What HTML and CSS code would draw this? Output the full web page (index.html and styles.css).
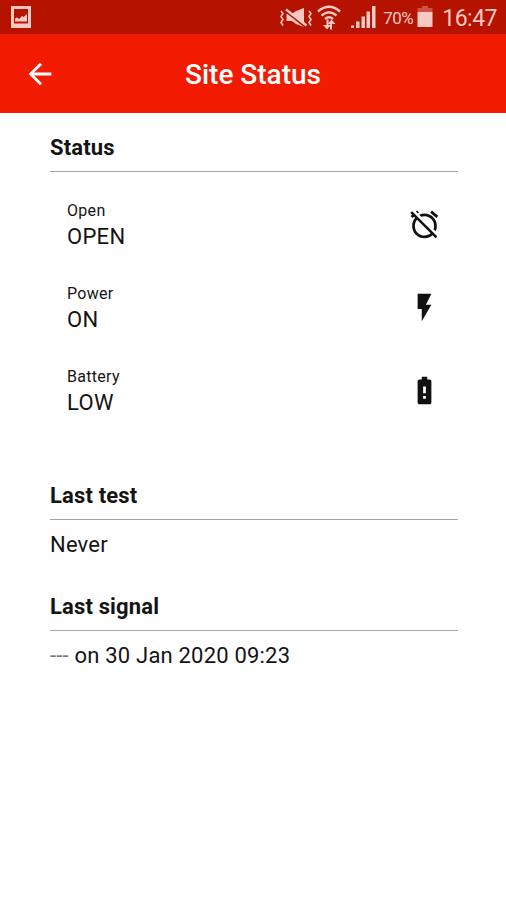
FILE: index.html
```html
<!DOCTYPE html>
<html lang="en">
<head>
    <meta charset="UTF-8">
    <meta name="viewport" content="width=device-width, initial-scale=1.0">
    <title>Site Status</title>
    <link rel="stylesheet" href="styles.css">
</head>
<body>
    <div class="status-bar">
        <svg class="icon-picture" width="20" height="22" viewBox="0 0 20 22">
            <path fill-rule="evenodd" d="M0 0h20v22H0zM3 3v14.500h14V3z"/>
            <path d="M4 15.500v-3l2-1 2 1.500 3-3 1.500 1L16 8v7.500z"/>
        </svg>
        <div class="system-icons">
            <svg class="icon-mute" width="34" height="24" viewBox="0 0 34 24">
                <path d="M7.500 8h5.500l4-3 8-3v19l-8-3-4-3H7.500z"/>
                <path class="gap-line" d="M7 5.500l20 16"/>
                <path class="line" d="M7 3.500l20.500 16"/>
                <path class="wave" d="M2 5l2 2.500-2 3 2 3-2 3 2 3M30 5l2 2.500-2 3 2 3-2 3 2 3"/>
            </svg>
            <svg class="icon-wifi" width="24" height="26" viewBox="0 0 24 26">
                <path class="arc" d="M1 7.500q11-9.500 22 0M4.500 11.500q7.500-6.500 15 0M8 15q4-3.400 8 0"/>
                <path d="M9.500 15.500h2V21H14l-4 4.500L6 21h3.500zM13 25.500V20h-2.500l4-4.500 4 4.500H15v5.500z"/>
            </svg>
            <svg class="icon-signal" width="25" height="23" viewBox="0 0 25 23">
                <path d="M0 20.500h3V23H0zM5 16.500h3.500V23H5zM10.500 11.500H14V23h-3.500zM15.500 6.500H19V23h-3.500zM21 1h3.500v22H21z"/>
            </svg>
            <span class="battery-level">70%</span>
            <svg class="icon-battery" width="16" height="21" viewBox="0 0 16 21">
                <path class="empty" d="M5 0h6v2h4.500v5H.5V2H5z"/>
                <path d="M.5 6h15v15H.5z"/>
            </svg>
            <span class="clock">16:47</span>
        </div>
    </div>

    <header class="app-bar">
        <svg class="back" width="34" height="34" viewBox="0 0 24 24">
            <path d="M20 11H7.830l5.590-5.590L12 4l-8 8 8 8 1.410-1.410L7.830 13H20z"/>
        </svg>
        <h1>Site Status</h1>
    </header>

    <main class="content">
        <section class="section">
            <h2>Status</h2>
            <ul class="status-list">
                <li class="status-item">
                    <div>
                        <p class="label">Open</p>
                        <p class="value">OPEN</p>
                    </div>
                    <svg class="item-icon" viewBox="0 0 24 24">
                        <path d="M12 6c3.870 0 7 3.130 7 7 0 .84-.16 1.650-.43 2.400l1.520 1.520c.58-1.190.91-2.510.91-3.920 0-4.970-4.030-9-9-9-1.410 0-2.730.33-3.920.91L9.600 6.430C10.350 6.160 11.160 6 12 6zm10-.28l-4.600-3.860-1.290 1.530 4.600 3.860L22 5.720zM2.920 2.290L1.650 3.570 2.980 4.900l-1.110.93 1.420 1.420 1.110-.94.8.8C3.830 8.690 3 10.750 3 13c0 4.970 4.020 9 9 9 2.250 0 4.310-.83 5.890-2.200l2.200 2.200 1.270-1.270L3.890 3.270l-.97-.98zm13.550 16.100C15.260 19.390 13.700 20 12 20c-3.870 0-7-3.130-7-7 0-1.700.61-3.260 1.610-4.470l9.860 9.860zM8.020 3.280L6.600 1.860l-.86.71 1.420 1.420.86-.71z"/>
                    </svg>
                </li>
                <li class="status-item">
                    <div>
                        <p class="label">Power</p>
                        <p class="value">ON</p>
                    </div>
                    <svg class="item-icon" viewBox="0 0 24 24">
                        <path d="M7 2v11h3v9l7-12h-4l4-8z"/>
                    </svg>
                </li>
                <li class="status-item">
                    <div>
                        <p class="label">Battery</p>
                        <p class="value">LOW</p>
                    </div>
                    <svg class="item-icon" viewBox="0 0 24 24">
                        <path d="M15.670 4H14V2h-4v2H8.330C7.600 4 7 4.600 7 5.330v15.330C7 21.400 7.600 22 8.330 22h7.330c.74 0 1.340-.6 1.340-1.330V5.330C17 4.600 16.400 4 15.670 4zM13 18h-2v-2h2v2zm0-4h-2V9h2v5z"/>
                    </svg>
                </li>
            </ul>
        </section>

        <section class="section">
            <h2>Last test</h2>
            <p class="value">Never</p>
        </section>

        <section class="section">
            <h2>Last signal</h2>
            <p class="value"><span class="dashes">---</span> on 30 Jan 2020 09:23</p>
        </section>
    </main>
</body>
</html>
```

FILE: styles.css
```css
:root {
    --primary-color: #f21b00;
    --primary-dark: #b51200;
    --status-text: #f8c9c3;
    --text-color: #141414;
    --line-color: #a3a3a3;
}

* {
    margin: 0;
    padding: 0;
    box-sizing: border-box;
}

body {
    font-family: Roboto, sans-serif;
    background-color: #fff;
    color: var(--text-color);
    min-height: 100vh;
}

svg {
    display: block;
    flex-shrink: 0;
}

/* Android status bar */
.status-bar {
    display: flex;
    justify-content: space-between;
    align-items: center;
    height: 34px;
    padding: 0 9px 0 11px;
    background-color: var(--primary-dark);
    color: var(--status-text);
    fill: currentColor;
}

.system-icons {
    display: flex;
    align-items: center;
    height: 34px;
    padding-top: 2px;
}

.line,
.wave,
.arc,
.gap-line {
    fill: none;
    stroke: currentColor;
    stroke-width: 2.4;
}

.wave {
    stroke-width: 1.6;
}

.gap-line {
    stroke: var(--primary-dark);
    stroke-width: 2;
}

.icon-wifi {
    margin: 0 10px 2px 4px;
}

.icon-signal {
    margin-bottom: 3px;
}

.battery-level {
    margin-left: 7px;
    font-size: 17px;
    letter-spacing: -0.5px;
}

.icon-battery {
    margin: 0 9px 3px 4px;
}

.icon-battery .empty {
    opacity: 0.35;
}

.clock {
    font-size: 23px;
    letter-spacing: -0.5px;
}

/* Title bar */
.app-bar {
    display: grid;
    grid-template-columns: 34px 1fr 34px;
    align-items: center;
    height: 79px;
    padding: 0 23px;
    background-color: var(--primary-color);
    color: #fff;
    fill: currentColor;
}

.app-bar h1 {
    padding-top: 2px;
    font-size: 28px;
    font-weight: 500;
    line-height: 34px;
    text-align: center;
}

/* Page content */
.content {
    padding: 20px 48px 0 50px;
}

.section h2 {
    height: 39px;
    border-bottom: 1px solid var(--line-color);
    font-size: 22px;
    font-weight: 700;
    line-height: 30px;
    letter-spacing: 0.15px;
}

.section > .value {
    padding: 10px 0 33px;
    letter-spacing: 0.2px;
}

.status-list {
    list-style: none;
    padding: 28px 17.5px 32px 17px;
}

.status-item {
    display: flex;
    justify-content: space-between;
    align-items: center;
    height: 50px;
    margin-bottom: 33px;
}

.label {
    font-size: 16px;
    line-height: 22px;
    letter-spacing: 0.3px;
}

.value {
    font-size: 22px;
    line-height: 29px;
    letter-spacing: 0.3px;
}

.dashes {
    color: #777;
}

.item-icon {
    width: 33px;
    height: 33px;
    margin-bottom: 2px;
    fill: #111;
}
```
